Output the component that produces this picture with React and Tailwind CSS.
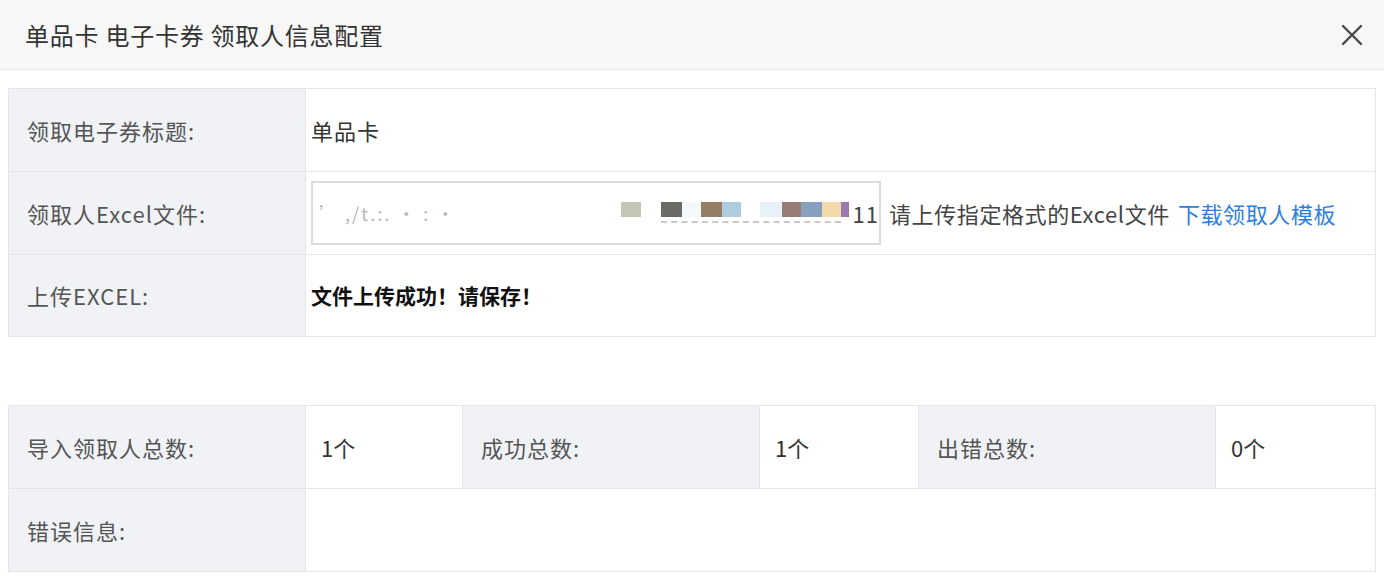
import React from "react";

const font = { fontFamily: '"Noto Sans CJK SC", "Noto Sans", sans-serif' };

function Label({ children, className = "" }) {
  return (
    <td className={"bg-[#f0f2f5] border border-[#e3e7ec] pl-[18px] text-[22px] tracking-[1px] text-[#555] align-middle " + className}>
      {children}
    </td>
  );
}

export default function App() {
  const blocks = [
    ["#c2c6b2", 20], ["#ffffff", 20], ["#6b6b66", 21], ["#f3f8fb", 19], ["#947e64", 21], ["#aecbe0", 19],
    ["#ffffff", 19], ["#e6f1f8", 22], ["#977b75", 19], ["#86a0bd", 21], ["#f4d9ab", 19], ["#9a78b0", 8],
  ];
  return (
    <div className="w-[1384px] h-[580px] bg-white overflow-hidden" style={font}>
      <div className="h-[70px] bg-[#f7f7f7] border-b border-[#e6e6e6] flex items-center justify-between pl-[25px] pr-[20px]">
        <div className="text-[24px] text-[#333] tracking-[0.75px]">单品卡 电子卡券 领取人信息配置</div>
        <svg width="22" height="22" viewBox="0 0 22 22" className="mr-[1px]">
          <path d="M2 2 L20 20 M20 2 L2 20" stroke="#4a4a4a" strokeWidth="2.4" strokeLinecap="round" />
        </svg>
      </div>

      <div className="px-[8px] pt-[18px]">
        <table className="w-full table-fixed border-collapse">
          <colgroup>
            <col className="w-[297px]" />
            <col />
          </colgroup>
          <tbody>
            <tr className="h-[83px]">
              <Label>领取电子券标题:</Label>
              <td className="border border-[#e3e7ec] pl-[5px] text-[22px] tracking-[1px] text-[#333]">单品卡</td>
            </tr>
            <tr className="h-[83px]">
              <Label>领取人Excel文件:</Label>
              <td className="border border-[#e3e7ec] pl-[5px]">
                <div className="flex items-center">
                  <div className="w-[570px] h-[64px] border-2 border-[#dcdcdc] flex items-center pl-[6px] overflow-hidden">
                    <span className="text-[18px] text-[#b8b8b8] tracking-[2px] w-[312px] whitespace-nowrap">&#8217;   ,/t.:.    ·     :  ·</span>
                    <div className="relative h-[24px] flex">
                      {blocks.map(([c, w], i) => (
                        <div key={i} style={{ background: c, width: w }} className="h-[15px] mt-[1px]" />
                      ))}
                      <div className="absolute left-[40px] right-[8px] top-[20px] border-t-2 border-dashed border-[#c9c9c9]" />
                    </div>
                    <span className="text-[22px] text-[#444] tracking-[1px] ml-[4px]">11</span>
                  </div>
                  <span className="ml-[8px] text-[22px] tracking-[0.6px] text-[#444] whitespace-nowrap">请上传指定格式的Excel文件</span>
                  <span className="ml-[8px] text-[22px] tracking-[0.6px] text-[#2d7fdc] whitespace-nowrap">下载领取人模板</span>
                </div>
              </td>
            </tr>
            <tr className="h-[82px]">
              <Label>上传EXCEL:</Label>
              <td className="border border-[#e3e7ec] pl-[5px] text-[21px] font-bold text-[#111]">文件上传成功！请保存！</td>
            </tr>
          </tbody>
        </table>

        <table className="w-full table-fixed border-collapse mt-[68px]">
          <colgroup>
            <col className="w-[297px]" />
            <col className="w-[157px]" />
            <col className="w-[297px]" />
            <col className="w-[159px]" />
            <col className="w-[297px]" />
            <col />
          </colgroup>
          <tbody>
            <tr className="h-[83px]">
              <Label>导入领取人总数:</Label>
              <td className="border border-[#e3e7ec] pl-[15px] text-[22px] text-[#333]">1个</td>
              <Label>成功总数:</Label>
              <td className="border border-[#e3e7ec] pl-[15px] text-[22px] text-[#333]">1个</td>
              <Label>出错总数:</Label>
              <td className="border border-[#e3e7ec] pl-[15px] text-[22px] text-[#333]">0个</td>
            </tr>
            <tr className="h-[83px]">
              <Label>错误信息:</Label>
              <td colSpan={5} className="border border-[#e3e7ec]"></td>
            </tr>
          </tbody>
        </table>
        <div className="mt-[9px] border-t border-[#eeeeee]" />
      </div>
    </div>
  );
}
